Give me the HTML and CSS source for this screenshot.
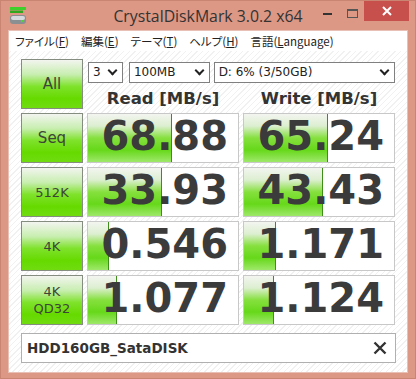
FILE: index.html
```html
<!DOCTYPE html>
<html lang="ja">
<head>
	<meta charset="UTF-8">
	<title>CrystalDiskMark 3.0.2 x64</title>
	<link rel="stylesheet" href="styles.css">
</head>
<body>
	<div class="window">
		<div class="titlebar">
			<div class="app-icon">
				<svg width="18" height="20" viewBox="0 0 18 20">
					<rect x="1" y="1" width="16" height="3" fill="#3fcf2a"/>
					<rect x="1" y="4.5" width="13" height="2.5" fill="#2fa81e"/>
					<rect x="1" y="9" width="16" height="9" rx="3" fill="#8a8f92"/>
					<rect x="2" y="10" width="14" height="4" rx="2" fill="#d7dadc"/>
					<rect x="12" y="14" width="3" height="2" fill="#4fd23a"/>
				</svg>
			</div>
			<div class="title">CrystalDiskMark 3.0.2 x64</div>
			<div class="controls">
				<span class="ctl-min"></span>
				<span class="ctl-max"></span>
				<span class="ctl-close">
					<svg width="10" height="10" viewBox="0 0 10 10"><path d="M1 1L9 9M9 1L1 9" stroke="#fff" stroke-width="2"/></svg>
				</span>
			</div>
		</div>
		<div class="client">
			<div class="menubar">
				<span>ファイル(<u>F</u>)</span>
				<span>編集(<u>E</u>)</span>
				<span>テーマ(<u>T</u>)</span>
				<span>ヘルプ(<u>H</u>)</span>
				<span>言語(<u>L</u>anguage)</span>
			</div>
			<div class="panel">
				<div class="btn btn-big">All</div>
				<div class="head">
					<div class="selects">
						<div class="sel sel-count">3<i class="chev"></i></div>
						<div class="sel sel-size">100MB<i class="chev"></i></div>
						<div class="sel sel-drive">D: 6% (3/50GB)<i class="chev"></i></div>
					</div>
					<div class="labels">
						<div>Read [MB/s]</div>
						<div>Write [MB/s]</div>
					</div>
				</div>

				<div class="btn btn-big">Seq</div>
				<div class="meter"><div class="bar" style="width:84px"></div><span>68.88</span></div>
				<div class="meter"><div class="bar" style="width:84px"></div><span>65.24</span></div>

				<div class="btn">512K</div>
				<div class="meter"><div class="bar" style="width:74px"></div><span>33.93</span></div>
				<div class="meter"><div class="bar" style="width:79px"></div><span>43.43</span></div>

				<div class="btn">4K</div>
				<div class="meter"><div class="bar" style="width:21px"></div><span>0.546</span></div>
				<div class="meter"><div class="bar" style="width:32px"></div><span>1.171</span></div>

				<div class="btn btn-two">4K<br>QD32</div>
				<div class="meter"><div class="bar" style="width:29px"></div><span>1.077</span></div>
				<div class="meter"><div class="bar" style="width:30px"></div><span>1.124</span></div>
			</div>
			<div class="comment">
				<span>HDD160GB_SataDISK</span>
				<svg width="14" height="14" viewBox="0 0 14 14"><path d="M1.5 1.5L12.5 12.5M12.5 1.5L1.5 12.5" stroke="#333" stroke-width="2.4"/></svg>
			</div>
		</div>
	</div>
</body>
</html>
```
FILE: styles.css
```css
*{padding:0;margin:0;box-sizing:border-box;}
body{
	width:416px;
	height:379px;
	overflow:hidden;
	background:#dc9885;
}
.window{
	width:416px;
	height:379px;
	background:#dc9885;
	border:1px solid #c98472;
}
.titlebar{
	height:29px;
	display:grid;
	grid-template-columns:1fr auto 1fr;
	align-items:start;
}
.app-icon{padding:5px 0 0 8px;}
.title{
	font-family:"Open Sans","Noto Sans",sans-serif;
	font-size:15.8px;
	color:#333;
	line-height:30px;
}
.controls{
	display:flex;
	justify-content:flex-end;
	align-items:flex-start;
	padding-right:6px;
}
.ctl-min{
	width:9px;
	height:2px;
	background:#333;
	margin:12px 15px 0 0;
}
.ctl-max{
	width:11px;
	height:9px;
	border:1px solid #555;
	border-top-width:2px;
	margin:8px 6px 0 0;
}
.ctl-close{
	width:45px;
	height:20px;
	background:#c7504c;
	display:flex;
	align-items:center;
	justify-content:center;
}
.client{
	margin:0 7px;
	height:343px;
	background:#fff repeating-linear-gradient(135deg,#fff 0,#fff 3px,#f1f1f1 3px,#f1f1f1 4px);
	border:1px solid #e8c0b5;
}
.menubar{
	height:20px;
	background:#fff;
	display:flex;
	gap:12px;
	padding-left:6px;
	font-family:"Noto Sans CJK JP",sans-serif;
	font-feature-settings:"palt" 1;
	font-size:11.5px;
	line-height:20px;
	color:#222;
}
.menubar u{text-underline-offset:1px;}
.panel{
	display:grid;
	grid-template-columns:62px 152px 152px;
	grid-auto-rows:50px;
	gap:4px;
	padding:8px 0 0 12px;
}
.btn{
	border:1px solid #858d80;
	background:linear-gradient(#f2f5ef 0%,#c8eeb0 30%,#7fe22c 55%,#66da00 80%,#70dc10 100%);
	display:flex;
	align-items:center;
	justify-content:center;
	text-align:center;
	font-family:"DejaVu Sans",sans-serif;
	font-size:13px;
	color:#3d4538;
	line-height:17px;
}
.btn-big{font-size:15px;}
.head{
	grid-column:2 / 4;
	display:flex;
	flex-direction:column;
}
.selects{
	display:flex;
	margin-top:3px;
	height:21px;
}
.sel{
	position:relative;
	border:1px solid #808080;
	background:#fff;
	font-family:"DejaVu Sans",sans-serif;
	font-size:12px;
	line-height:19px;
	padding-left:4px;
	color:#222;
}
.sel-count{width:35px;margin-left:1px;}
.sel-size{width:81px;margin-left:6px;}
.sel-drive{width:182px;margin-left:4px;}
.chev{
	position:absolute;
	right:6px;
	top:4px;
	width:7px;
	height:7px;
	border-right:2px solid #222;
	border-bottom:2px solid #222;
	transform:rotate(45deg);
}
.labels{
	display:grid;
	grid-template-columns:152px 152px;
	gap:4px;
	margin-top:6px;
	font-family:"DejaVu Sans",sans-serif;
	font-weight:bold;
	font-size:16.5px;
	color:#333;
	text-align:center;
	line-height:20px;
}
.meter{
	position:relative;
	border:1px solid #c8c8c8;
	background:#fff;
	text-align:right;
	padding-right:10px;
	font-family:"DejaVu Sans",sans-serif;
	font-weight:bold;
	font-size:40px;
	line-height:44px;
	color:#3b3b3b;
}
.meter .bar{
	position:absolute;
	left:0;
	top:0;
	bottom:0;
	background:linear-gradient(#f3f5f0 0%,#dcefd0 25%,#86e03e 50%,#66d81a 75%,#9fe86a 100%);
	border-right:1px solid #3e8e1a;
}
.meter span{position:relative;}
.comment{
	margin:8px 0 0 12px;
	width:375px;
	height:30px;
	border:1px solid #b0b0b0;
	background:#fff;
	display:flex;
	align-items:center;
	justify-content:space-between;
	padding:0 8px 0 5px;
	font-family:"DejaVu Sans",sans-serif;
	font-weight:bold;
	font-size:13.5px;
	color:#333;
}
```
